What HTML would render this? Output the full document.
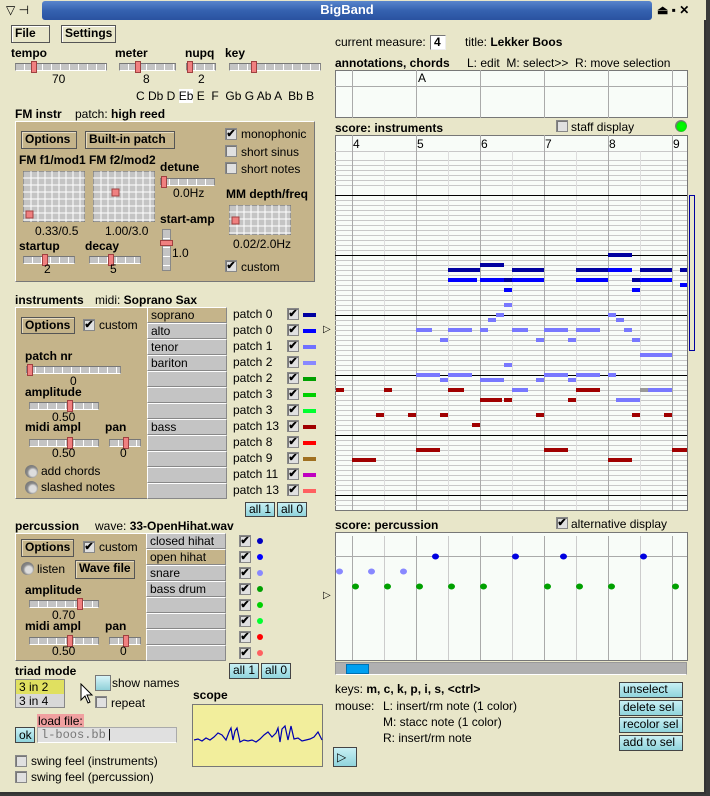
<!DOCTYPE html>
<html><head><meta charset="utf-8">
<style>
*{margin:0;padding:0;box-sizing:border-box}
body{width:710px;height:796px;overflow:hidden;background:#3a3a3a;font:12px "Liberation Sans",sans-serif;color:#000;position:relative}
#win{position:absolute;left:0;top:0;width:706px;height:794px;background:#e8e6c9;border-right:2px solid #333;border-bottom:2px solid #333}
.a{position:absolute}
.t{position:absolute;white-space:nowrap;line-height:14px;font-size:12px}
.b{font-weight:bold}
.btn{position:absolute;border:1px solid #555;background:#e8e6c9;font-weight:bold;font-size:12px;line-height:15px;padding-left:3px;box-shadow:inset 1px 1px 0 #fff}
.tbtn{position:absolute;border:1px solid #555;background:#c5b48a;font-weight:bold;font-size:12px;line-height:15px;padding-left:3px;box-shadow:inset 1px 1px 0 #e8dcc0}
.cbtn{position:absolute;border:1px solid #444;background:linear-gradient(#c8f0f4,#90d4dc);font-size:12px;line-height:13px;padding-left:3px}
.sl{position:absolute;height:8px;background:repeating-linear-gradient(90deg,#c4c4c4 0,#c4c4c4 8px,#fff 8px,#fff 9px);border:1px solid #888;border-top-color:#777;border-bottom-color:#fff}
.th{position:absolute;top:-3px;width:6px;height:12px;background:#f08080;border:1px solid #a04040}
.cb{position:absolute;width:12px;height:12px;background:#e0e0e0;border:1px solid #888;box-shadow:inset 1px 1px 0 #777;font-size:11px;line-height:11px;text-align:center;font-weight:bold}
.panel{position:absolute;background:#c5b48a;border:1px solid #fff;border-right-color:#777;border-bottom-color:#777}
.row{position:absolute;height:16px;background:#c4c4c4;border:1px solid #fff;border-right-color:#888;border-bottom-color:#888;font-size:12px;line-height:14px;padding-left:3px}
.sel{background:#c5b48a}
.bar{position:absolute;width:13px;height:4px}
.dot{position:absolute;width:6px;height:6px;border-radius:3px}
.rad{position:absolute;width:13px;height:13px;border-radius:7px;background:radial-gradient(circle at 60% 60%,#ddd 0,#ddd 30%,#888 50%,#666 100%)}
</style></head><body>
<div id="win">
<div class="a" style="left:0;top:0;width:706px;height:20px;background:#e8e6c9"></div>
<div class="a" style="left:42px;top:1px;width:610px;height:19px;background:linear-gradient(#5a86cc,#3562b0 50%,#2a52a0);border-radius:3px"></div>
<div class="t" style="left:42px;top:3px;width:610px;text-align:center;color:#fff;font-weight:bold;font-size:13px">BigBand</div>
<div class="t" style="left:6px;top:3px;font-size:12px">▽ ⊣</div>
<div class="t" style="left:657px;top:3px;font-size:12px;font-weight:bold">⏏ ▪ ✕</div>

<div class="btn" style="left:11px;top:25px;width:39px;height:18px">File</div>
<div class="btn" style="left:61px;top:25px;width:55px;height:18px">Settings</div>

<div class="t b" style="left:11px;top:46px">tempo</div>
<div class="sl" style="left:15px;top:63px;width:92px"><div class="th" style="left:15px"></div></div>
<div class="t" style="left:52px;top:72px">70</div>
<div class="t b" style="left:115px;top:46px">meter</div>
<div class="sl" style="left:119px;top:63px;width:57px"><div class="th" style="left:15px"></div></div>
<div class="t" style="left:143px;top:72px">8</div>
<div class="t b" style="left:185px;top:46px">nupq</div>
<div class="sl" style="left:186px;top:63px;width:30px"><div class="th" style="left:0px"></div></div>
<div class="t" style="left:198px;top:72px">2</div>
<div class="t b" style="left:225px;top:46px">key</div>
<div class="sl" style="left:229px;top:63px;width:92px"><div class="th" style="left:21px"></div></div>
<div class="t" style="left:136px;top:89px">C Db D <span style="background:#fff">Eb</span> E &nbsp;F &nbsp;Gb G Ab A &nbsp;Bb B</div>

<div class="t b" style="left:15px;top:107px">FM instr</div>
<div class="t" style="left:75px;top:107px">patch: <b>high reed</b></div>
<div class="panel" style="left:15px;top:121px;width:300px;height:161px"></div>
<div class="tbtn" style="left:21px;top:131px;width:56px;height:18px">Options</div>
<div class="tbtn" style="left:85px;top:131px;width:90px;height:18px">Built-in patch</div>
<div class="cb" style="left:225px;top:128px">✔</div><div class="t" style="left:241px;top:127px">monophonic</div>
<div class="cb" style="left:225px;top:145px"></div><div class="t" style="left:241px;top:145px">short sinus</div>
<div class="cb" style="left:225px;top:162px"></div><div class="t" style="left:241px;top:162px">short notes</div>
<div class="t b" style="left:19px;top:153px">FM f1/mod1</div>
<div class="t b" style="left:89px;top:153px">FM f2/mod2</div>
<svg class="a" style="left:23px;top:171px" width="62" height="51"><rect width="62" height="51" fill="#c4c4c4" stroke="#666"/><path d="M8 0V51M15 0V51M22 0V51M29 0V51M36 0V51M43 0V51M50 0V51M57 0V51M0 7H62M0 14H62M0 21H62M0 28H62M0 35H62M0 42H62M0 49H62" stroke="#fff"/><rect x="3" y="40" width="7" height="7" fill="#f08080" stroke="#a04040"/></svg>
<svg class="a" style="left:93px;top:171px" width="62" height="51"><rect width="62" height="51" fill="#c4c4c4" stroke="#666"/><path d="M8 0V51M15 0V51M22 0V51M29 0V51M36 0V51M43 0V51M50 0V51M57 0V51M0 7H62M0 14H62M0 21H62M0 28H62M0 35H62M0 42H62M0 49H62" stroke="#fff"/><rect x="19" y="18" width="7" height="7" fill="#f08080" stroke="#a04040"/></svg>
<div class="t" style="left:35px;top:224px">0.33/0.5</div>
<div class="t" style="left:105px;top:224px">1.00/3.0</div>
<div class="t b" style="left:160px;top:160px">detune</div>
<div class="sl" style="left:160px;top:178px;width:55px"><div class="th" style="left:0"></div></div>
<div class="t" style="left:173px;top:186px">0.0Hz</div>
<div class="t b" style="left:226px;top:187px">MM depth/freq</div>
<svg class="a" style="left:229px;top:205px" width="62" height="30"><rect width="62" height="30" fill="#c4c4c4" stroke="#666"/><path d="M8 0V30M15 0V30M22 0V30M29 0V30M36 0V30M43 0V30M50 0V30M57 0V30M0 7H62M0 14H62M0 21H62M0 28H62" stroke="#fff"/><rect x="3" y="12" width="7" height="7" fill="#f08080" stroke="#a04040"/></svg>
<div class="t" style="left:233px;top:237px">0.02/2.0Hz</div>
<div class="t b" style="left:160px;top:212px">start-amp</div>
<div class="a" style="left:162px;top:229px;width:9px;height:42px;background:repeating-linear-gradient(#c4c4c4 0,#c4c4c4 8px,#fff 8px,#fff 9px);border:1px solid #888"><div class="a" style="left:-3px;top:10px;width:13px;height:6px;background:#f08080;border:1px solid #a04040"></div></div>
<div class="t" style="left:172px;top:246px">1.0</div>
<div class="t b" style="left:19px;top:239px">startup</div>
<div class="sl" style="left:23px;top:256px;width:52px"><div class="th" style="left:18px"></div></div>
<div class="t" style="left:44px;top:262px">2</div>
<div class="t b" style="left:85px;top:239px">decay</div>
<div class="sl" style="left:89px;top:256px;width:52px"><div class="th" style="left:18px"></div></div>
<div class="t" style="left:110px;top:262px">5</div>
<div class="cb" style="left:225px;top:260px">✔</div><div class="t" style="left:241px;top:260px">custom</div>

<div class="t b" style="left:15px;top:293px">instruments</div>
<div class="t" style="left:95px;top:293px">midi: <b>Soprano Sax</b></div>
<div class="panel" style="left:15px;top:307px;width:133px;height:192px"></div>
<div class="tbtn" style="left:21px;top:317px;width:54px;height:17px">Options</div>
<div class="cb" style="left:83px;top:319px">✔</div><div class="t" style="left:99px;top:318px">custom</div>
<div class="t b" style="left:25px;top:349px">patch nr</div>
<div class="sl" style="left:26px;top:366px;width:95px"><div class="th" style="left:0"></div></div>
<div class="t" style="left:70px;top:374px">0</div>
<div class="t b" style="left:25px;top:385px">amplitude</div>
<div class="sl" style="left:29px;top:402px;width:70px"><div class="th" style="left:37px"></div></div>
<div class="t" style="left:52px;top:410px">0.50</div>
<div class="t b" style="left:25px;top:420px">midi ampl</div>
<div class="t b" style="left:105px;top:420px">pan</div>
<div class="sl" style="left:29px;top:439px;width:70px"><div class="th" style="left:37px"></div></div>
<div class="t" style="left:52px;top:446px">0.50</div>
<div class="sl" style="left:109px;top:439px;width:32px"><div class="th" style="left:13px"></div></div>
<div class="t" style="left:120px;top:446px">0</div>
<div class="rad" style="left:25px;top:465px"></div><div class="t" style="left:41px;top:464px">add chords</div>
<div class="rad" style="left:25px;top:481px"></div><div class="t" style="left:41px;top:480px">slashed notes</div>
<div class="row sel" style="left:147px;top:307px;width:80px">soprano</div>
<div class="row" style="left:147px;top:323px;width:80px">alto</div>
<div class="row" style="left:147px;top:339px;width:80px">tenor</div>
<div class="row" style="left:147px;top:355px;width:80px">bariton</div>
<div class="row" style="left:147px;top:371px;width:80px"></div>
<div class="row" style="left:147px;top:387px;width:80px"></div>
<div class="row" style="left:147px;top:403px;width:80px"></div>
<div class="row" style="left:147px;top:419px;width:80px">bass</div>
<div class="row" style="left:147px;top:435px;width:80px"></div>
<div class="row" style="left:147px;top:451px;width:80px"></div>
<div class="row" style="left:147px;top:467px;width:80px"></div>
<div class="row" style="left:147px;top:483px;width:80px"></div>

<div class="t" style="left:233px;top:307px">patch 0</div><div class="cb" style="left:287px;top:308px">✔</div><div class="bar" style="left:303px;top:313px;background:#0000a0"></div>
<div class="t" style="left:233px;top:323px">patch 0</div><div class="cb" style="left:287px;top:324px">✔</div><div class="bar" style="left:303px;top:329px;background:#0000ff"></div>
<div class="t" style="left:233px;top:339px">patch 1</div><div class="cb" style="left:287px;top:340px">✔</div><div class="bar" style="left:303px;top:345px;background:#7070ff"></div>
<div class="t" style="left:233px;top:355px">patch 2</div><div class="cb" style="left:287px;top:356px">✔</div><div class="bar" style="left:303px;top:361px;background:#8888ff"></div>
<div class="t" style="left:233px;top:371px">patch 2</div><div class="cb" style="left:287px;top:372px">✔</div><div class="bar" style="left:303px;top:377px;background:#00a000"></div>
<div class="t" style="left:233px;top:387px">patch 3</div><div class="cb" style="left:287px;top:388px">✔</div><div class="bar" style="left:303px;top:393px;background:#00d000"></div>
<div class="t" style="left:233px;top:403px">patch 3</div><div class="cb" style="left:287px;top:404px">✔</div><div class="bar" style="left:303px;top:409px;background:#00ff30"></div>
<div class="t" style="left:233px;top:419px">patch 13</div><div class="cb" style="left:287px;top:420px">✔</div><div class="bar" style="left:303px;top:425px;background:#a00000"></div>
<div class="t" style="left:233px;top:435px">patch 8</div><div class="cb" style="left:287px;top:436px">✔</div><div class="bar" style="left:303px;top:441px;background:#ff0000"></div>
<div class="t" style="left:233px;top:451px">patch 9</div><div class="cb" style="left:287px;top:452px">✔</div><div class="bar" style="left:303px;top:457px;background:#a07020"></div>
<div class="t" style="left:233px;top:467px">patch 11</div><div class="cb" style="left:287px;top:468px">✔</div><div class="bar" style="left:303px;top:473px;background:#c000c0"></div>
<div class="t" style="left:233px;top:483px">patch 13</div><div class="cb" style="left:287px;top:484px">✔</div><div class="bar" style="left:303px;top:489px;background:#ff6060"></div>
<div class="cbtn" style="left:245px;top:502px;width:30px;height:15px">all 1</div>
<div class="cbtn" style="left:277px;top:502px;width:30px;height:15px">all 0</div>
<div class="t" style="left:323px;top:323px;font-size:10px">▷</div>

<div class="t b" style="left:15px;top:519px">percussion</div>
<div class="t" style="left:95px;top:519px">wave: <b>33-OpenHihat.wav</b></div>
<div class="panel" style="left:15px;top:533px;width:133px;height:128px"></div>
<div class="tbtn" style="left:21px;top:539px;width:53px;height:18px">Options</div>
<div class="cb" style="left:83px;top:541px">✔</div><div class="t" style="left:99px;top:540px">custom</div>
<div class="rad" style="left:21px;top:562px"></div><div class="t" style="left:37px;top:562px">listen</div>
<div class="tbtn" style="left:75px;top:560px;width:60px;height:19px">Wave file</div>
<div class="t b" style="left:25px;top:583px">amplitude</div>
<div class="sl" style="left:29px;top:600px;width:70px"><div class="th" style="left:47px"></div></div>
<div class="t" style="left:52px;top:608px">0.70</div>
<div class="t b" style="left:25px;top:619px">midi ampl</div>
<div class="t b" style="left:105px;top:619px">pan</div>
<div class="sl" style="left:29px;top:637px;width:70px"><div class="th" style="left:37px"></div></div>
<div class="t" style="left:52px;top:644px">0.50</div>
<div class="sl" style="left:109px;top:637px;width:32px"><div class="th" style="left:13px"></div></div>
<div class="t" style="left:120px;top:644px">0</div>
<div class="row" style="left:146px;top:533px;width:80px">closed hihat</div>
<div class="row sel" style="left:146px;top:549px;width:80px">open hihat</div>
<div class="row" style="left:146px;top:565px;width:80px">snare</div>
<div class="row" style="left:146px;top:581px;width:80px">bass drum</div>
<div class="row" style="left:146px;top:597px;width:80px"></div>
<div class="row" style="left:146px;top:613px;width:80px"></div>
<div class="row" style="left:146px;top:629px;width:80px"></div>
<div class="row" style="left:146px;top:645px;width:80px"></div>
<div class="cb" style="left:239px;top:535px">✔</div><div class="dot" style="left:257px;top:538px;background:#0000c0"></div>
<div class="cb" style="left:239px;top:551px">✔</div><div class="dot" style="left:257px;top:554px;background:#0000ff"></div>
<div class="cb" style="left:239px;top:567px">✔</div><div class="dot" style="left:257px;top:570px;background:#8888ff"></div>
<div class="cb" style="left:239px;top:583px">✔</div><div class="dot" style="left:257px;top:586px;background:#00a000"></div>
<div class="cb" style="left:239px;top:599px">✔</div><div class="dot" style="left:257px;top:602px;background:#00d000"></div>
<div class="cb" style="left:239px;top:615px">✔</div><div class="dot" style="left:257px;top:618px;background:#00ff30"></div>
<div class="cb" style="left:239px;top:631px">✔</div><div class="dot" style="left:257px;top:634px;background:#ff0000"></div>
<div class="cb" style="left:239px;top:647px">✔</div><div class="dot" style="left:257px;top:650px;background:#ff6060"></div>
<div class="cbtn" style="left:229px;top:663px;width:30px;height:16px">all 1</div>
<div class="cbtn" style="left:261px;top:663px;width:30px;height:16px">all 0</div>
<div class="t" style="left:323px;top:589px;font-size:10px">▷</div>

<div class="t b" style="left:15px;top:664px">triad mode</div>
<div class="a" style="left:15px;top:679px;width:50px;height:29px;border:1px solid #888;background:#d8d8d8"></div>
<div class="t" style="left:16px;top:680px;width:48px;height:14px;background:#e0e060;padding-left:3px">3 in 2</div>
<div class="t" style="left:16px;top:694px;padding-left:3px">3 in 4</div>
<svg class="a" style="left:80px;top:683px" width="14" height="22"><path d="M1 1L1 17L5 13L8 20L10 19L7 12L12 12Z" fill="#fff" stroke="#000"/></svg>
<div class="a" style="left:95px;top:675px;width:16px;height:16px;border:1px solid #777;background:linear-gradient(#d8f4f8,#90d0d8)"></div>
<div class="t" style="left:112px;top:676px">show names</div>
<div class="cb" style="left:95px;top:696px"></div><div class="t" style="left:111px;top:696px">repeat</div>
<div class="t b" style="left:193px;top:688px">scope</div>
<svg class="a" style="left:192px;top:704px" width="131" height="63"><rect x=".5" y=".5" width="130" height="62" fill="#f2ee9c" stroke="#777"/><path d="M2 36L6 35L10 37L14 34L18 36L22 33L26 29L30 31L34 36L37 28L39 24L41 36L43 27L45 24L48 38L52 36L56 37L60 36L64 38L68 35L72 31L76 28L80 33L84 29L86 24L88 38L90 25L93 22L96 36L99 22L102 35L106 34L110 37L114 36L118 35L122 33L126 28L130 36" fill="none" stroke="#0000b0" stroke-width="1.2"/></svg>
<div class="t" style="left:37px;top:714px;background:#f0a0a0;padding:0 1px">load file:</div>
<div class="cbtn" style="left:15px;top:727px;width:20px;height:16px;line-height:14px">ok</div>
<div class="a" style="left:37px;top:727px;width:140px;height:16px;background:#e0e0e0;border:1px solid #aaa;border-bottom-color:#fff;font:12px 'Liberation Mono',monospace;color:#777;padding-left:3px;line-height:14px">l-boos.bb<span style="color:#000">|</span></div>
<div class="cb" style="left:15px;top:755px"></div><div class="t" style="left:31px;top:754px">swing feel (instruments)</div>
<div class="cb" style="left:15px;top:771px"></div><div class="t" style="left:31px;top:770px">swing feel (percussion)</div>

<div class="t" style="left:335px;top:35px">current measure:</div>
<div class="a" style="left:430px;top:35px;width:16px;height:15px;background:#fff;border:1px solid #777;border-right-color:#eee;border-bottom-color:#eee;font-weight:bold;line-height:13px;padding-left:3px">4</div>
<div class="t" style="left:465px;top:35px">title: <b>Lekker Boos</b></div>
<div class="t b" style="left:335px;top:56px">annotations, chords</div>
<div class="t" style="left:467px;top:56px">L: edit &nbsp;M: select&gt;&gt; &nbsp;R: move selection</div>
<svg class="a" style="left:335px;top:70px" width="353" height="48"><rect x=".5" y=".5" width="352" height="47" fill="#f8fcf8" stroke="#777"/><path d="M17.5 0V48M81.5 0V48M145.5 0V48M209.5 0V48M273.5 0V48M337.5 0V48M0 16.5H353" stroke="#aaa"/></svg>
<div class="t" style="left:418px;top:71px">A</div>
<div class="t b" style="left:335px;top:121px">score: instruments</div>
<div class="cb" style="left:556px;top:120px"></div><div class="t" style="left:571px;top:120px">staff display</div>
<div class="a" style="left:675px;top:120px;width:12px;height:12px;border-radius:6px;background:radial-gradient(circle at 55% 55%,#00ff00 0,#00ee00 50%,#777 60%,#999 100%)"></div>

<svg class="a" style="left:335px;top:135px" width="353" height="376" viewBox="335 135 353 376">
<rect x="335.5" y="135.5" width="352" height="375" fill="#f8fcf8" stroke="#777"/>
<g stroke="#c8c8c8" stroke-width="1">
<path d="M335 151.5H687M335 160.5H687M335 165.5H687M335 170.5H687M335 175.5H687M335 180.5H687M335 185.5H687"/>
<path d="M335 200.5H687M335 205.5H687M335 210.5H687M335 215.5H687M335 220.5H687M335 225.5H687M335 230.5H687M335 235.5H687M335 240.5H687M335 245.5H687M335 250.5H687"/>
<path d="M335 260.5H687M335 265.5H687M335 270.5H687M335 275.5H687M335 280.5H687M335 285.5H687M335 290.5H687M335 295.5H687M335 300.5H687M335 305.5H687M335 310.5H687"/>
<path d="M335 320.5H687M335 325.5H687M335 330.5H687M335 335.5H687M335 340.5H687M335 345.5H687M335 350.5H687M335 355.5H687M335 360.5H687M335 365.5H687M335 370.5H687"/>
<path d="M335 380.5H687M335 385.5H687M335 390.5H687M335 395.5H687M335 400.5H687M335 405.5H687M335 410.5H687M335 415.5H687M335 420.5H687M335 425.5H687M335 430.5H687"/>
<path d="M335 440.5H687M335 445.5H687M335 450.5H687M335 455.5H687M335 460.5H687M335 465.5H687M335 470.5H687M335 475.5H687M335 480.5H687M335 485.5H687M335 490.5H687"/>
<path d="M335 500.5H687M335 505.5H687"/>
</g>
<path d="M384.5 151V510M448.5 151V510M512.5 151V510M576.5 151V510M640.5 151V510" stroke="#ddd"/>
<path d="M352.5 135V510M416.5 135V510M480.5 135V510M544.5 135V510M608.5 135V510M672.5 135V510" stroke="#aaa"/>
<path d="M335 195.5H687M335 255.5H687M335 315.5H687M335 375.5H687M335 435.5H687M335 495.5H687" stroke="#000"/>
<g font-family="Liberation Sans" font-size="12"><text x="353" y="148">4</text><text x="417" y="148">5</text><text x="481" y="148">6</text><text x="545" y="148">7</text><text x="609" y="148">8</text><text x="673" y="148">9</text></g>
<g fill="#0000a0"><rect x="608" y="253" width="24" height="4"/><rect x="448" y="268" width="32" height="4"/><rect x="480" y="263" width="24" height="4"/><rect x="512" y="268" width="32" height="4"/><rect x="576" y="268" width="32" height="4"/><rect x="640" y="268" width="32" height="4"/><rect x="680" y="268" width="7" height="4"/><rect x="504" y="278" width="8" height="4"/><rect x="632" y="278" width="8" height="4"/></g>
<g fill="#0000ff"><rect x="448" y="278" width="29" height="4"/><rect x="480" y="278" width="24" height="4"/><rect x="512" y="278" width="32" height="4"/><rect x="576" y="278" width="32" height="4"/><rect x="640" y="278" width="32" height="4"/><rect x="608" y="268" width="24" height="4"/><rect x="504" y="288" width="8" height="4"/><rect x="632" y="288" width="8" height="4"/><rect x="680" y="283" width="7" height="4"/></g>
<g fill="#7878ff"><rect x="504" y="303" width="8" height="4"/><rect x="496" y="313" width="8" height="4"/><rect x="488" y="318" width="8" height="4"/><rect x="608" y="313" width="8" height="4"/><rect x="616" y="318" width="8" height="4"/>
<rect x="416" y="328" width="16" height="4"/><rect x="448" y="328" width="24" height="4"/><rect x="480" y="328" width="8" height="4"/><rect x="512" y="328" width="16" height="4"/><rect x="544" y="328" width="24" height="4"/><rect x="576" y="328" width="24" height="4"/><rect x="624" y="328" width="8" height="4"/>
<rect x="440" y="338" width="8" height="4"/><rect x="536" y="338" width="8" height="4"/><rect x="568" y="338" width="8" height="4"/><rect x="632" y="338" width="8" height="4"/><rect x="640" y="353" width="32" height="4"/><rect x="504" y="363" width="8" height="4"/>
<rect x="416" y="373" width="24" height="4"/><rect x="448" y="373" width="24" height="4"/><rect x="544" y="373" width="24" height="4"/><rect x="576" y="373" width="24" height="4"/><rect x="608" y="373" width="8" height="4"/>
<rect x="440" y="378" width="8" height="4"/><rect x="480" y="378" width="24" height="4"/><rect x="536" y="378" width="8" height="4"/><rect x="568" y="378" width="8" height="4"/>
<rect x="512" y="388" width="16" height="4"/><rect x="648" y="388" width="24" height="4"/><rect x="616" y="398" width="24" height="4"/></g>
<rect x="640" y="388" width="8" height="4" fill="#999"/>
<g fill="#a00000"><rect x="336" y="388" width="8" height="4"/><rect x="384" y="388" width="8" height="4"/><rect x="448" y="388" width="16" height="4"/><rect x="576" y="388" width="24" height="4"/><rect x="480" y="398" width="22" height="4"/><rect x="504" y="398" width="8" height="4"/><rect x="568" y="398" width="8" height="4"/>
<rect x="376" y="413" width="8" height="4"/><rect x="408" y="413" width="8" height="4"/><rect x="440" y="413" width="8" height="4"/><rect x="536" y="413" width="8" height="4"/><rect x="632" y="413" width="8" height="4"/><rect x="664" y="413" width="8" height="4"/><rect x="472" y="423" width="8" height="4"/>
<rect x="416" y="448" width="24" height="4"/><rect x="544" y="448" width="24" height="4"/><rect x="672" y="448" width="15" height="4"/><rect x="352" y="458" width="24" height="4"/><rect x="608" y="458" width="24" height="4"/></g>
</svg>
<div class="a" style="left:689px;top:195px;width:6px;height:156px;border:1px solid #0000a0;background:#e8e6c9"></div>

<div class="t b" style="left:335px;top:518px">score: percussion</div>
<div class="cb" style="left:556px;top:517px">✔</div><div class="t" style="left:571px;top:517px">alternative display</div>
<svg class="a" style="left:335px;top:532px" width="353" height="129" viewBox="335 532 353 129">
<rect x="335.5" y="532.5" width="352" height="128" fill="#f8fcf8" stroke="#777"/>
<path d="M384.5 536V660M448.5 536V660M512.5 536V660M576.5 536V660M640.5 536V660" stroke="#ccc"/>
<path d="M352.5 536V660M416.5 536V660M480.5 536V660M544.5 536V660M608.5 536V660M672.5 536V660" stroke="#aaa"/>
<path d="M335 556.5H687" stroke="#aaa"/>
<g fill="#0000e0"><ellipse cx="435.5" cy="556.5" rx="3.5" ry="3"/><ellipse cx="515.5" cy="556.5" rx="3.5" ry="3"/><ellipse cx="563.5" cy="556.5" rx="3.5" ry="3"/><ellipse cx="643.5" cy="556.5" rx="3.5" ry="3"/></g>
<g fill="#8888ff"><ellipse cx="339.5" cy="571.5" rx="3.5" ry="3"/><ellipse cx="371.5" cy="571.5" rx="3.5" ry="3"/><ellipse cx="403.5" cy="571.5" rx="3.5" ry="3"/></g>
<g fill="#00a000"><ellipse cx="355.5" cy="586.5" rx="3.5" ry="3"/><ellipse cx="387.5" cy="586.5" rx="3.5" ry="3"/><ellipse cx="419.5" cy="586.5" rx="3.5" ry="3"/><ellipse cx="451.5" cy="586.5" rx="3.5" ry="3"/><ellipse cx="483.5" cy="586.5" rx="3.5" ry="3"/><ellipse cx="547.5" cy="586.5" rx="3.5" ry="3"/><ellipse cx="579.5" cy="586.5" rx="3.5" ry="3"/><ellipse cx="611.5" cy="586.5" rx="3.5" ry="3"/><ellipse cx="675.5" cy="586.5" rx="3.5" ry="3"/></g>
</svg>
<div class="a" style="left:335px;top:662px;width:352px;height:13px;background:#b0b0b0;border:1px solid #999;border-bottom-color:#fff"></div>
<div class="a" style="left:346px;top:664px;width:23px;height:10px;background:#00a0f0;border:1px solid #0070b0"></div>

<div class="t" style="left:335px;top:682px">keys: <b>m, c, k, p, i, s, &lt;ctrl&gt;</b></div>
<div class="t" style="left:335px;top:699px">mouse:</div>
<div class="t" style="left:383px;top:699px">L: insert/rm note (1 color)</div>
<div class="t" style="left:383px;top:715px">M: stacc note (1 color)</div>
<div class="t" style="left:383px;top:731px">R: insert/rm note</div>
<div class="cbtn" style="left:333px;top:747px;width:24px;height:20px;line-height:18px">▷</div>
<div class="cbtn" style="left:619px;top:682px;width:64px;height:16px">unselect</div>
<div class="cbtn" style="left:619px;top:700px;width:64px;height:16px">delete sel</div>
<div class="cbtn" style="left:619px;top:717px;width:64px;height:16px">recolor sel</div>
<div class="cbtn" style="left:619px;top:735px;width:64px;height:16px">add to sel</div>
</div>
</body></html>
